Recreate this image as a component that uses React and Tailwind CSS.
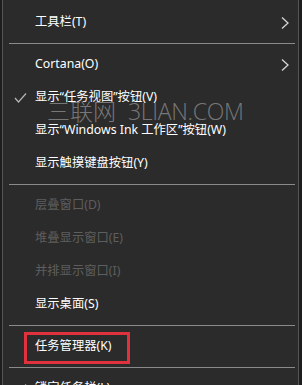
import React from 'react';

const font = { fontFamily: '"Noto Sans", "Noto Sans CJK SC", sans-serif' };

const Chevron = () => (
  <svg width="10" height="14" viewBox="0 0 10 14" className="absolute right-[8px] top-1/2 -translate-y-1/2">
    <path d="M2 1.5 L8 7 L2 12.5" fill="none" stroke="#d6d6d6" strokeWidth="1.3" />
  </svg>
);

const Check = () => (
  <svg width="13" height="11" viewBox="0 0 13 11" className="absolute left-[11px] top-1/2 -translate-y-1/2">
    <path d="M1 5.5 L4.5 9.5 L12 1" fill="none" stroke="#b5b5b5" strokeWidth="1.2" />
  </svg>
);

const Item = ({ label, sub, checked, disabled, boxed }) => (
  <div className="relative h-[33px] flex items-center pl-[32px]">
    {checked && <Check />}
    <span
      className={`text-[12.3px] leading-none whitespace-nowrap ${disabled ? 'text-[#5e5e5e]' : 'text-white'}`}
    >
      {label}
    </span>
    {sub && <Chevron />}
    {boxed && (
      <div className="absolute left-[21px] top-[2px] w-[106px] h-[32px] border-[3px] border-[#e0323c]" />
    )}
  </div>
);

const Sep = () => (
  <div className="h-[9px] flex items-center pl-[6px] pr-[3px]">
    <div className="w-full h-px bg-[#8a8a8a]" />
  </div>
);

export default function App() {
  return (
    <div className="w-[302px] h-[385px] bg-[#1e1e1e] overflow-hidden" style={font}>
      <div className="relative ml-[2px] w-[297px] h-[420px] bg-[#2b2b2b] border-l border-r border-[#555] pt-[6px]">
        <Item label="工具栏(T)" sub />
        <Sep />
        <Item label="Cortana(O)" sub />
        <Item label="显示“任务视图”按钮(V)" checked />
        <Item label="显示“Windows Ink 工作区”按钮(W)" />
        <Item label="显示触摸键盘按钮(Y)" />
        <Sep />
        <Item label="层叠窗口(D)" disabled />
        <Item label="堆叠显示窗口(E)" disabled />
        <Item label="并排显示窗口(I)" disabled />
        <Item label="显示桌面(S)" />
        <Sep />
        <Item label="任务管理器(K)" boxed />
        <Sep />
        <Item label="锁定任务栏(L)" checked />

        <div
          className="absolute left-[44px] top-[100px] flex items-baseline gap-[12px] text-[#8a8a8a] opacity-80 pointer-events-none"
        >
          <span className="text-[23px] font-light leading-none">三联网</span>
          <span className="text-[23px] font-light leading-none tracking-[-0.3px]" style={{ fontFamily: '"Open Sans", sans-serif' }}>
            3LIAN.COM
          </span>
        </div>
      </div>
    </div>
  );
}
